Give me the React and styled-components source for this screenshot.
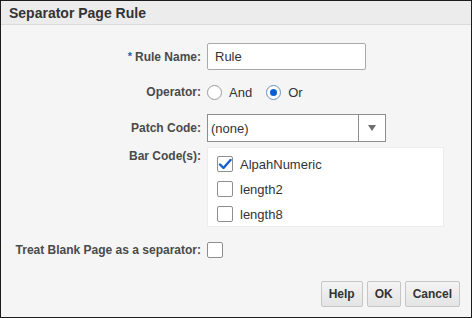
import React from 'react';
import styled, { createGlobalStyle } from 'styled-components';

const GlobalStyle = createGlobalStyle`
  html, body {
    margin: 0;
    padding: 0;
    background: #fff;
  }
  * {
    box-sizing: border-box;
  }
`;

const Dialog = styled.div`
  width: 472px;
  height: 318px;
  border: 1px solid #1c1c1c;
  background: #f5f5f5;
  font-family: 'Liberation Sans', Arial, sans-serif;
  display: flex;
  flex-direction: column;
`;

const TitleBar = styled.div`
  height: 24px;
  flex-shrink: 0;
  background: #ececec;
  border-bottom: 1px solid #dcdcdc;
  padding-left: 8px;
  display: flex;
  align-items: center;
  font-size: 14px;
  font-weight: bold;
  color: #333;
`;

const Body = styled.div`
  flex: 1;
  padding: 18px 11px 0 0;
  display: flex;
  flex-direction: column;
`;

const Row = styled.div`
  display: grid;
  grid-template-columns: 200px 1fr;
  column-gap: 6px;
  align-items: ${(p) => (p.$top ? 'start' : 'center')};
  margin-top: ${(p) => p.$mt || 0}px;
`;

const Label = styled.label`
  text-align: right;
  font-size: 12px;
  font-weight: bold;
  color: #4a4a4a;
  white-space: nowrap;
  padding-top: ${(p) => p.$pt || 0}px;
`;

const Required = styled.span`
  color: #1f5fa8;
  font-size: 11px;
  vertical-align: top;
  margin-right: 3px;
`;

const TextInput = styled.div`
  width: 159px;
  height: 27px;
  background: #fff;
  border: 1px solid #a9a9a9;
  border-radius: 2px;
  padding: 0 7px;
  display: flex;
  align-items: center;
  font-size: 13px;
  color: #333;
`;

const RadioGroup = styled.div`
  display: flex;
  align-items: center;
  height: 20px;
  font-size: 13px;
  color: #333;
`;

const RadioItem = styled.span`
  display: flex;
  align-items: center;
  gap: 7px;
  margin-right: 14px;
`;

const Radio = styled.span`
  width: 15px;
  height: 15px;
  border-radius: 50%;
  background: #fff;
  border: 1px solid ${(p) => (p.$on ? '#6b8fbf' : '#9a9a9a')};
  display: flex;
  align-items: center;
  justify-content: center;
  &::after {
    content: '';
    display: ${(p) => (p.$on ? 'block' : 'none')};
    width: 7px;
    height: 7px;
    border-radius: 50%;
    background: #0a5fd0;
  }
`;

const Select = styled.div`
  width: 179px;
  height: 28px;
  background: #fff;
  border: 1px solid #8e8e8e;
  display: flex;
  font-size: 13px;
  color: #333;
`;

const SelectValue = styled.div`
  flex: 1;
  display: flex;
  align-items: center;
  padding-left: 3px;
  border-right: 1px solid #8e8e8e;
`;

const SelectArrow = styled.div`
  width: 26px;
  display: flex;
  align-items: center;
  justify-content: center;
  &::after {
    content: '';
    border-left: 4px solid transparent;
    border-right: 4px solid transparent;
    border-top: 6px solid #6e6e6e;
  }
`;

const CheckList = styled.div`
  width: 237px;
  height: 80px;
  background: #fff;
  border: 1px solid #ececec;
  padding: 8px 0 0 9px;
  display: flex;
  flex-direction: column;
  gap: 9px;
`;

const CheckRow = styled.div`
  display: flex;
  align-items: center;
  gap: 7px;
  font-size: 13px;
  color: #333;
  height: 16px;
`;

const Box = styled.span`
  width: 16px;
  height: 16px;
  background: #fff;
  border: 1px solid #8e8e8e;
  border-radius: 2px;
  display: flex;
  align-items: center;
  justify-content: center;
  flex-shrink: 0;
`;

const Buttons = styled.div`
  margin-top: auto;
  margin-bottom: 10px;
  display: flex;
  justify-content: flex-end;
  gap: 4px;
`;

const Button = styled.button`
  height: 26px;
  padding: 0 7px;
  font-family: 'Liberation Sans', Arial, sans-serif;
  font-size: 12px;
  font-weight: bold;
  color: #333;
  background: linear-gradient(#f4f4f4, #e4e4e4);
  border: 1px solid #c6c6c6;
  border-radius: 2px;
`;

const Check = () => (
  <svg width="14" height="12" viewBox="0 0 14 12">
    <path d="M2 6.5 L5.5 10 L12.5 2" fill="none" stroke="#1560c8" strokeWidth="2.4" strokeLinecap="round" strokeLinejoin="round" />
  </svg>
);

const codes = [
  { name: 'AlpahNumeric', on: true },
  { name: 'length2', on: false },
  { name: 'length8', on: false },
];

export default function App() {
  return (
    <>
      <GlobalStyle />
      <Dialog>
        <TitleBar>Separator Page Rule</TitleBar>
        <Body>
          <Row>
            <Label>
              <Required>*</Required>Rule Name:
            </Label>
            <TextInput>Rule</TextInput>
          </Row>
          <Row $mt={12}>
            <Label>Operator:</Label>
            <RadioGroup>
              <RadioItem>
                <Radio />
                And
              </RadioItem>
              <RadioItem>
                <Radio $on />
                Or
              </RadioItem>
            </RadioGroup>
          </Row>
          <Row $mt={12}>
            <Label>Patch Code:</Label>
            <Select>
              <SelectValue>(none)</SelectValue>
              <SelectArrow />
            </Select>
          </Row>
          <Row $mt={5} $top>
            <Label $pt={2}>Bar Code(s):</Label>
            <CheckList>
              {codes.map((c) => (
                <CheckRow key={c.name}>
                  <Box>{c.on && <Check />}</Box>
                  {c.name}
                </CheckRow>
              ))}
            </CheckList>
          </Row>
          <Row $mt={15}>
            <Label>Treat Blank Page as a separator:</Label>
            <Box />
          </Row>
          <Buttons>
            <Button>Help</Button>
            <Button>OK</Button>
            <Button>Cancel</Button>
          </Buttons>
        </Body>
      </Dialog>
    </>
  );
}
